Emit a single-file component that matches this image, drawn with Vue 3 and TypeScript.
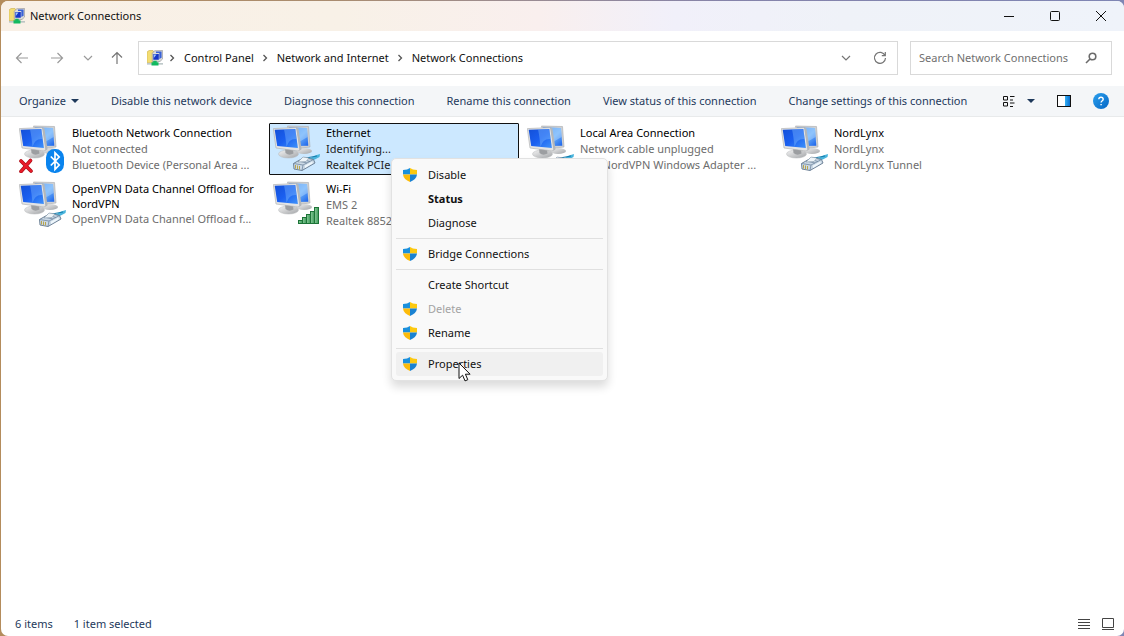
<script setup lang="ts">
import { ref } from 'vue'

type Overlay = 'bluetooth' | 'cable' | 'wifi'

interface Connection {
  name: string
  status: string
  device: string
  overlay: Overlay
  selected?: boolean
}

interface MenuEntry {
  label: string
  shield?: boolean
  bold?: boolean
  disabled?: boolean
  active?: boolean
}

const crumbs = ['Control Panel', 'Network and Internet', 'Network Connections']

const commands = [
  'Disable this network device',
  'Diagnose this connection',
  'Rename this connection',
  'View status of this connection',
  'Change settings of this connection',
]

const connections: Connection[] = [
  { name: 'Bluetooth Network Connection', status: 'Not connected', device: 'Bluetooth Device (Personal Area ...', overlay: 'bluetooth' },
  { name: 'Ethernet', status: 'Identifying...', device: 'Realtek PCIe', overlay: 'cable', selected: true },
  { name: 'Local Area Connection', status: 'Network cable unplugged', device: 'TAP-NordVPN Windows Adapter ...', overlay: 'cable' },
  { name: 'NordLynx', status: 'NordLynx', device: 'NordLynx Tunnel', overlay: 'cable' },
  { name: 'OpenVPN Data Channel Offload for NordVPN', status: '', device: 'OpenVPN Data Channel Offload f...', overlay: 'cable' },
  { name: 'Wi-Fi', status: 'EMS 2', device: 'Realtek 8852', overlay: 'wifi' },
]

const menuGroups: MenuEntry[][] = [
  [{ label: 'Disable', shield: true }, { label: 'Status', bold: true }, { label: 'Diagnose' }],
  [{ label: 'Bridge Connections', shield: true }],
  [{ label: 'Create Shortcut' }, { label: 'Delete', shield: true, disabled: true }, { label: 'Rename', shield: true }],
  [{ label: 'Properties', shield: true, active: true }],
]

const query = ref('')
</script>

<template>
  <svg class="sprites" aria-hidden="true">
    <defs>
      <linearGradient id="screen" x1="0" y1="0" x2="1" y2="1">
        <stop offset="0" stop-color="#1450d8" />
        <stop offset="0.5" stop-color="#1a5ff0" />
        <stop offset="1" stop-color="#3f92fa" />
      </linearGradient>
      <linearGradient id="screenBack" x1="0" y1="0" x2="1" y2="1">
        <stop offset="0" stop-color="#3a86ee" />
        <stop offset="0.55" stop-color="#6db1fa" />
        <stop offset="1" stop-color="#1a62ea" />
      </linearGradient>
      <linearGradient id="stand" x1="0" y1="0" x2="1" y2="1">
        <stop offset="0" stop-color="#f4f4f4" />
        <stop offset="1" stop-color="#a3a5a8" />
      </linearGradient>
      <linearGradient id="bars" x1="0" y1="0" x2="1" y2="0">
        <stop offset="0" stop-color="#8ccb9b" />
        <stop offset="1" stop-color="#3b9a58" />
      </linearGradient>
      <linearGradient id="pane" x1="0" y1="0" x2="1" y2="0">
        <stop offset="0" stop-color="#35b0f4" />
        <stop offset="1" stop-color="#0a6fd0" />
      </linearGradient>
      <linearGradient id="helpFill" x1="0" y1="0" x2="1" y2="1">
        <stop offset="0" stop-color="#2ba0ee" />
        <stop offset="1" stop-color="#0566c4" />
      </linearGradient>
    </defs>
    <symbol id="monitors" viewBox="0 0 48 48">
      <ellipse cx="31" cy="26" rx="8" ry="3" fill="url(#stand)" />
      <path d="M14.500 1L35.500 1.500L37 22L20 24Z" fill="#cfd1d3" stroke="#a7a9ac" stroke-width=".6" />
      <path d="M16 2.300L34 3L35.300 20.800L22 21Z" fill="url(#screenBack)" />
      <path d="M24 2.700L34 3L34.600 12L26 17Z" fill="#b7dcff" opacity=".45" />
      <ellipse cx="15.500" cy="29" rx="10" ry="4" fill="url(#stand)" stroke="#b4b6b8" stroke-width=".5" />
      <path d="M12 23L20 24L20.500 28.500Q16 31 12.500 28Z" fill="#9c9ea1" />
      <path d="M.3 3.600L23.500 2.500L27.300 24.600L25 26L3 23Z" fill="#e3e4e5" stroke="#a9abad" stroke-width=".6" />
      <path d="M23.500 2.500L25.300 3.100L28.600 24.200L26.500 25.700Z" fill="#b4b7ba" />
      <path d="M1.700 4.800L22.300 4L24.900 23L4.200 21Z" fill="url(#screen)" />
      <path d="M11 4.400L22.300 4L23.700 14Q16 13 13.500 21.800Q12.500 11 11 4.400Z" fill="#83bdff" opacity=".4" />
    </symbol>
    <symbol id="cable" viewBox="0 0 48 48">
      <path d="M36 34L42 30.500L47 29L46.500 32L38 36.500Z" fill="#49b4dc" />
      <path d="M33 33L44 31" stroke="#147cad" stroke-width="1" fill="none" />
      <path d="M20.500 38.500L31 32.500L40.500 34.500L42 38L29 45.500L21 44Z" fill="#cbd9e6" stroke="#63788f" stroke-width=".9" />
      <path d="M20.500 38.500L30 40L40.500 34.500M30 40L29 45.500M25 36L34 38M28 34L37 36.500" fill="none" stroke="#7188a0" stroke-width=".8" />
      <path d="M32 40.500L39.500 36.500V38.500L32 43Z" fill="#eff7fc" />
      <path d="M22.500 40V43.500M24.500 40.500V44M26.500 41V44.500" stroke="#b9a54e" stroke-width="1" />
      <path d="M25 37L30 32L36 33L33 36.500Z" fill="#eef4f8" stroke="#8799aa" stroke-width=".6" />
    </symbol>
    <symbol id="wifi" viewBox="0 0 48 48">
      <g fill="url(#bars)" stroke="#1d7438" stroke-width="1">
        <rect x="25.500" y="39.500" width="4" height="3" />
        <rect x="29.500" y="36.500" width="4" height="6" />
        <rect x="33.500" y="33.500" width="4" height="9" />
        <rect x="37.500" y="30.500" width="4" height="12" />
        <rect x="41.500" y="26.500" width="4" height="16" />
      </g>
    </symbol>
    <symbol id="bluetooth" viewBox="0 0 48 48">
      <path d="M2 36L12 46M11.500 35.500L2 46.500" stroke="#a80d18" stroke-width="3.600" stroke-linecap="round" />
      <path d="M2 36L12 46M11.500 35.500L2 46.500" stroke="#ea1c2a" stroke-width="2.400" stroke-linecap="round" />
      <rect x="27" y="24" width="18" height="24" rx="8.500" fill="#0a84ee" />
      <path d="M31.800 31.500L40.200 40L36 44.300V27.800L40.200 32L31.800 40.500" fill="none" stroke="#fff" stroke-width="1.700" />
    </symbol>
    <symbol id="shield" viewBox="0 0 14 14">
      <path d="M7 0Q4.500 2 0 2V6.500H7Z" fill="#1b90dc" />
      <path d="M7 0Q9.500 2 14 2V6.500H7Z" fill="#fdc90f" />
      <path d="M0 6.500H7V14Q.6 11.500 0 6.500Z" fill="#fdbb0a" />
      <path d="M14 6.500H7V14Q13.400 11.500 14 6.500Z" fill="#1a82d2" />
    </symbol>
    <symbol id="folder" viewBox="0 0 16 16">
      <path d="M0 2L2 .5H6L7 2V12.500H0Z" fill="#f3dd72" stroke="#cdb04a" stroke-width=".6" />
      <path d="M7.500 .8L15.600 .5V9L13 11.500H5.300V3.300Z" fill="#dcdcda" stroke="#8b8b90" stroke-width=".6" />
      <path d="M9 1.600L14.600 1.500V7.800L12.300 9V3L9 2.900Z" fill="#3a62d6" />
      <path d="M6.300 4H11.800V9.800H6.300Z" fill="#1738c8" />
      <path d="M6.800 4.500H9.500L6.800 8Z" fill="#9fc6f7" />
      <path d="M0 13.800H16" stroke="#a9b7b8" stroke-width="1.300" />
      <path d="M6.300 10.800H9.700V12.300H11.500V15.600H4.500V12.300H6.300Z" fill="#12b960" />
    </symbol>
  </svg>

  <main class="window">
    <header class="titlebar">
      <svg class="app-icon"><use href="#folder" /></svg>
      <h1>Network Connections</h1>
      <div class="caption">
        <button type="button" aria-label="Minimize"><svg viewBox="0 0 12 12"><path d="M1 6.500H11" /></svg></button>
        <button type="button" aria-label="Maximize"><svg viewBox="0 0 12 12"><rect x="1.500" y="1.500" width="9" height="9" rx="1" /></svg></button>
        <button type="button" aria-label="Close"><svg viewBox="0 0 12 12"><path d="M1 1L11 11M11 1L1 11" /></svg></button>
      </div>
    </header>

    <nav class="navbar" aria-label="Navigation">
      <div class="history">
        <button type="button" aria-label="Back"><svg viewBox="0 0 14 14"><path d="M13 7H1.500M6.500 2L1.500 7L6.500 12" /></svg></button>
        <button type="button" aria-label="Forward"><svg viewBox="0 0 14 14"><path d="M1 7H12.500M7.500 2L12.500 7L7.500 12" /></svg></button>
        <button type="button" class="recent" aria-label="Recent locations"><svg viewBox="0 0 14 14"><path d="M3 5L7 9L11 5" /></svg></button>
        <button type="button" class="up" aria-label="Up"><svg viewBox="0 0 14 14"><path d="M7 13V1.500M2 6.500L7 1.500L12 6.500" /></svg></button>
      </div>
      <div class="address">
        <svg class="app-icon"><use href="#folder" /></svg>
        <template v-for="crumb in crumbs" :key="crumb">
          <svg class="chevron" viewBox="0 0 6 8"><path d="M1.500 1L4.500 4L1.500 7" /></svg>
          <a href="#">{{ crumb }}</a>
        </template>
        <button type="button" class="drop" aria-label="Previous locations"><svg viewBox="0 0 14 14"><path d="M3 5L7 9L11 5" /></svg></button>
        <button type="button" aria-label="Refresh"><svg viewBox="0 0 14 14"><path d="M12 4.500A5.500 5.500 0 1 0 12.500 7M12.300 1V4.700H8.800" /></svg></button>
      </div>
      <label class="search">
        <input v-model="query" type="text" placeholder="Search Network Connections" aria-label="Search Network Connections" />
        <svg viewBox="0 0 12 12"><circle cx="7.500" cy="4.500" r="3.300" /><path d="M5 7L1 11" /></svg>
      </label>
    </nav>

    <div class="toolbar" role="toolbar" aria-label="Commands">
      <button type="button" class="organize">Organize <svg viewBox="0 0 8 4"><path d="M0 0H8L4 4Z" /></svg></button>
      <button v-for="command in commands" :key="command" type="button">{{ command }}</button>
      <div class="view-tools">
        <button type="button" class="view" aria-label="Change your view">
          <svg class="list" viewBox="0 0 12 12"><path d="M.5 1.500H4.500V5H.5ZM.5 7.500H4.500V11H.5ZM7 1.500H11.500M7 5H10M7 8H11.500M7 11.500H10" /></svg>
          <svg class="arrow" viewBox="0 0 8 4"><path d="M0 0H8L4 4Z" /></svg>
        </button>
        <button type="button" aria-label="Show the preview pane">
          <svg class="preview" viewBox="0 0 14 12"><rect x=".5" y=".5" width="13" height="11" fill="#fff" stroke="#111" /><rect x="8" y="1" width="5" height="10" fill="url(#pane)" /></svg>
        </button>
        <button type="button" class="help" aria-label="Get help">
          <svg viewBox="0 0 16 16"><circle cx="8" cy="8" r="8" fill="url(#helpFill)" /><path d="M5.800 6.300Q5.900 4.300 8 4.300T10.200 6.200Q10.200 7.200 9 8Q8.100 8.600 8.100 9.600M8.100 10.900V12.300" fill="none" stroke="#fff" stroke-width="1.400" /></svg>
        </button>
      </div>
    </div>

    <section class="content" aria-label="Connections">
      <ul class="connections">
        <li v-for="item in connections" :key="item.name" :class="{ selected: item.selected }">
          <svg class="device" aria-hidden="true"><use href="#monitors" /><use :href="'#' + item.overlay" /></svg>
          <div class="details">
            <p class="name" :class="{ wrapped: !item.status }">{{ item.name }}</p>
            <p v-if="item.status">{{ item.status }}</p>
            <p class="adapter">{{ item.device }}</p>
          </div>
        </li>
      </ul>

      <div class="menu" role="menu">
        <div v-for="(group, index) in menuGroups" :key="index" class="group" role="group">
          <button
            v-for="entry in group"
            :key="entry.label"
            type="button"
            role="menuitem"
            :disabled="entry.disabled"
            :class="{ bold: entry.bold, active: entry.active }"
          >
            <span class="slot"><svg v-if="entry.shield"><use href="#shield" /></svg></span>
            {{ entry.label }}
          </button>
        </div>
        <svg class="pointer" viewBox="0 0 13 20" aria-hidden="true">
          <path d="M1 1V16.500L4.600 13.200L7 18.900L9.800 17.700L7.400 12.200H12.100Z" fill="#fff" stroke="#111" stroke-width="1" />
        </svg>
      </div>
    </section>

    <footer class="statusbar">
      <span>6 items</span>
      <span>1 item selected</span>
      <div class="layouts">
        <button type="button" aria-label="Details view"><svg viewBox="0 0 12 12"><path d="M0 1.500H12M0 4.500H12M0 7.500H12M0 10.500H12" /></svg></button>
        <button type="button" aria-label="Large icons view"><svg viewBox="0 0 12 12"><path d="M.5 .5H11.500V9.500H.5ZM0 11.500H12" /></svg></button>
      </div>
    </footer>
  </main>
</template>

<style>
body {
  margin: 0;
  background: linear-gradient(90deg, #b48c5c, #a98c70 30%, #9c8c90 45%, #8583aa 65%, #7f86b4);
}
</style>

<style scoped>
.sprites {
  position: absolute;
  width: 0;
  height: 0;
}

.window {
  box-sizing: border-box;
  min-height: calc(100vh - 1px);
  margin: 1px 0 0 1px;
  display: flex;
  flex-direction: column;
  overflow: hidden;
  border-radius: 7px;
  background: #fff;
  color: #111;
  font: 11px/16px "Noto Sans", "Open Sans", sans-serif;
}

button {
  display: flex;
  align-items: center;
  padding: 0;
  border: 0;
  background: none;
  color: inherit;
  font: inherit;
  white-space: nowrap;
}

svg {
  display: block;
  flex: none;
}

.app-icon {
  width: 16px;
  height: 16px;
}

.titlebar {
  display: flex;
  align-items: center;
  gap: 5px;
  height: 30px;
  padding-left: 8px;
  background: linear-gradient(90deg, #f9f0e6, #f8f1e7 30%, #f9efee 48%, #f1f0fa 60%, #eff2f8 75%, #eff3fa);
}

h1 {
  margin: 0;
  font: inherit;
}

.caption {
  display: flex;
  margin-left: auto;
}

.caption button {
  justify-content: center;
  width: 46px;
  height: 30px;
}

.caption svg {
  width: 12px;
  height: 12px;
  fill: none;
  stroke: #111;
}

.navbar {
  box-sizing: border-box;
  display: flex;
  align-items: center;
  height: 55px;
  padding: 0 12px 2px 0;
}

.history {
  display: flex;
  align-items: center;
  width: 137px;
}

.history button {
  justify-content: center;
  width: 35px;
  height: 30px;
}

.history button:first-child {
  margin-left: 3px;
}

.history .recent {
  width: 27px;
}

.history .up {
  width: 32px;
}

.history svg,
.address button svg {
  width: 14px;
  height: 14px;
  fill: none;
  stroke: #9a9a9a;
  stroke-width: 1.2px;
}

.history .up svg,
.address button svg {
  stroke: #757575;
}

.address {
  box-sizing: border-box;
  flex: 1;
  display: flex;
  align-items: center;
  height: 34px;
  padding: 0 10px 0 8px;
  border: 1px solid #d9d9d9;
}

.address a {
  color: #111;
  text-decoration: none;
}

.chevron {
  width: 6px;
  height: 8px;
  margin: 0 9px 0 8px;
  fill: none;
  stroke: #555;
  stroke-width: 1.3px;
}

.app-icon + .chevron {
  margin-left: 6px;
}

.address .drop {
  margin: 0 20px 0 auto;
}

.search {
  box-sizing: border-box;
  display: flex;
  align-items: center;
  width: 202px;
  height: 34px;
  margin-left: 12px;
  padding: 0 14px 0 8px;
  border: 1px solid #d9d9d9;
}

.search input {
  flex: 1;
  min-width: 0;
  padding: 0;
  border: 0;
  outline: 0;
  background: none;
  color: #111;
  font: inherit;
}

.search input::placeholder {
  color: #707070;
  opacity: 1;
}

.search svg {
  width: 12px;
  height: 12px;
  fill: none;
  stroke: #6b6b6b;
  stroke-width: 1.6px;
}

.toolbar {
  box-sizing: border-box;
  display: flex;
  align-items: center;
  gap: 32px;
  height: 31px;
  padding: 0 15px 0 18px;
  border-bottom: 1px solid #e8eaeb;
  background: #f4f6f8;
  color: #1e395b;
}

.toolbar > button {
  flex: none;
}

.organize {
  gap: 5px;
}

.organize svg,
.arrow {
  width: 8px;
  height: 4px;
  fill: #1e395b;
}

.view-tools {
  display: flex;
  align-items: center;
  gap: 22px;
  margin-left: auto;
}

.view {
  gap: 12px;
}

.list {
  width: 12px;
  height: 12px;
  fill: none;
  stroke: #111;
}

.preview {
  width: 14px;
  height: 12px;
}

.help svg {
  width: 16px;
  height: 16px;
}

.content {
  position: relative;
  flex: 1;
}

.connections {
  display: grid;
  grid-template-columns: repeat(auto-fill, 250px);
  gap: 4px;
  margin: 0;
  padding: 6px 14px;
  list-style: none;
}

.connections li {
  box-sizing: border-box;
  display: flex;
  gap: 5px;
  height: 52px;
  padding: 1px 3px;
  border: 1px solid transparent;
  border-radius: 1px;
  color: #6d6d6d;
}

.connections .selected {
  border-color: #111;
  background: #cce8ff;
  color: #222;
}

.device {
  width: 48px;
  height: 48px;
}

.details {
  flex: 1;
  min-width: 0;
}

.details p {
  margin: 0;
}

.details .name {
  color: #000;
}

.details .wrapped {
  line-height: 15px;
}

.details .adapter {
  white-space: nowrap;
}

.menu {
  position: absolute;
  top: 41px;
  left: 390px;
  box-sizing: border-box;
  width: 217px;
  padding: 4px;
  border: 1px solid #e2e2e2;
  border-radius: 5px;
  background: #f9f9f9;
  color: #111;
  box-shadow: 0 6px 10px rgba(0, 0, 0, 0.14);
}

.group + .group {
  margin-top: 3px;
  padding-top: 3px;
  border-top: 1px solid #e0e0e0;
}

.menu button {
  width: 100%;
  height: 24px;
  padding-left: 7px;
  border-radius: 3px;
}

.menu .bold {
  font-weight: 700;
}

.menu .active {
  background: #f0f0f0;
}

.menu button:disabled {
  color: #a3a3a3;
}

.slot {
  width: 25px;
}

.slot svg {
  width: 14px;
  height: 14px;
}

.pointer {
  position: absolute;
  top: 203px;
  left: 66px;
  width: 13px;
  height: 20px;
}

.statusbar {
  display: flex;
  align-items: center;
  gap: 21px;
  height: 24px;
  padding: 0 10px 0 14px;
  color: #1e395b;
}

.layouts {
  display: flex;
  gap: 12px;
  margin-left: auto;
}

.layouts svg {
  width: 12px;
  height: 12px;
  fill: none;
  stroke: #444;
}
</style>
